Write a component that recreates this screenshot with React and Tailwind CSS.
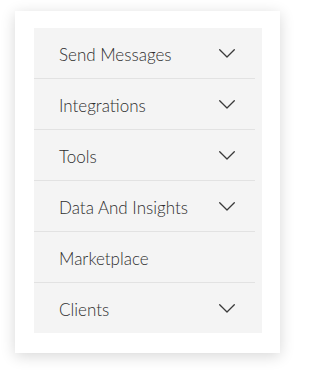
import React from "react";

const items = [
  { label: "Send Messages", chevron: true },
  { label: "Integrations", chevron: true },
  { label: "Tools", chevron: true },
  { label: "Data And Insights", chevron: true },
  { label: "Marketplace", chevron: false },
  { label: "Clients", chevron: true },
];

function Chevron() {
  return (
    <svg width="16" height="9" viewBox="0 0 16 9" fill="none" className="shrink-0">
      <path d="M0.7 0.7 L8 8 L15.3 0.7" stroke="#3a3a3a" strokeWidth="1.3" strokeLinecap="round" strokeLinejoin="round" />
    </svg>
  );
}

export default function App() {
  return (
    <div className="w-[295px] h-[372px] bg-white pt-[11px] pl-[15px]" style={{ fontFamily: "Lato, 'Open Sans', sans-serif" }}>
      <div className="w-[265px] h-[342px] bg-white shadow-[0_3px_14px_rgba(0,0,0,0.16)] pt-[17px] pl-[19px]">
        <div className="w-[228px] bg-[#f4f4f4] pr-[7px]">
          {items.map((it, i) => (
            <div
              key={it.label}
              className={`flex items-center justify-between pl-[25px] pr-[20px] ${i < items.length - 1 ? "h-[51px] border-b border-[#e2e2e2]" : "h-[50px]"}`}
            >
              <span className="text-[17px] font-light text-[#2e2e2e] leading-none pt-[3px]">{it.label}</span>
              {it.chevron && <Chevron />}
            </div>
          ))}
        </div>
      </div>
    </div>
  );
}
